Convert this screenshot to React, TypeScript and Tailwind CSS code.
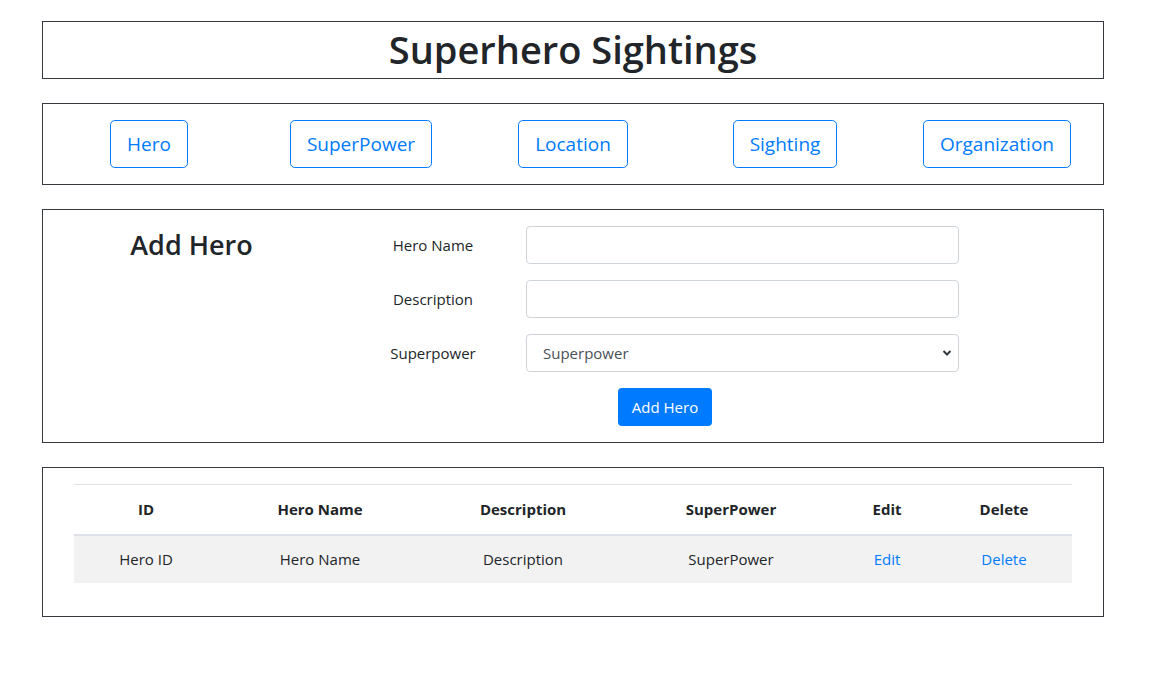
import React from "react";

const font = { fontFamily: '"Open Sans", "Noto Sans", "Liberation Sans", sans-serif' };

export default function App() {
  const navs = ["Hero", "SuperPower", "Location", "Sighting", "Organization"];
  return (
    <div className="min-h-[685px] bg-white text-[#212529]" style={font}>
      <div className="pt-[21px] pl-[42px] w-[1104px] flex flex-col gap-[24px]">
        {/* Title */}
        <div className="h-[58px] border border-[#343a40] flex items-center justify-center">
          <h1 className="text-[38px] leading-[1.2] font-semibold tracking-[0px]">Superhero Sightings</h1>
        </div>

        {/* Nav */}
        <div className="border border-[#343a40] py-[16px] grid grid-cols-5 justify-items-center">
          {navs.map((n) => (
            <button
              key={n}
              className="h-[48px] px-[16px] border border-[#007bff] rounded-[4.8px] text-[#007bff] text-[19px] leading-[1.5] bg-white"
            >
              {n}
            </button>
          ))}
        </div>

        {/* Add Hero form */}
        <div className="border border-[#343a40] py-[16px] flex">
          <div className="w-[297px] flex justify-center">
            <h2 className="text-[27px] leading-[38px] font-semibold tracking-[0px]">Add Hero</h2>
          </div>
          <div className="flex flex-col gap-[16px]">
            {["Hero Name", "Description"].map((l) => (
              <div key={l} className="flex items-center">
                <label className="w-[186px] text-center text-[15px]">{l}</label>
                <input className="w-[433px] h-[38px] border border-[#ced4da] rounded-[4px] px-3 text-[15px] outline-none" />
              </div>
            ))}
            <div className="flex items-center">
              <label className="w-[186px] text-center text-[15px]">Superpower</label>
              <div className="relative w-[433px] h-[38px] border border-[#ced4da] rounded-[4px] flex items-center pl-[16px] text-[15px] text-[#495057]">
                <span>Superpower</span>
                <svg className="absolute right-[6px] top-[14px]" width="10" height="8" viewBox="0 0 10 8">
                  <path d="M1.5 2 L5 5.5 L8.5 2" fill="none" stroke="#343a40" strokeWidth="2" />
                </svg>
              </div>
            </div>
            <div className="pl-[278px]">
              <button className="w-[94px] h-[38px] bg-[#007bff] text-white rounded-[4px] text-[15px]">Add Hero</button>
            </div>
          </div>
        </div>

        {/* Table */}
        <div className="border border-[#343a40] pt-[16px] pb-[33px] px-[31px]">
          <table className="w-[998px] table-fixed border-collapse text-center text-[15px]">
            <colgroup>
              <col className="w-[144px]" />
              <col className="w-[204px]" />
              <col className="w-[202px]" />
              <col className="w-[214px]" />
              <col className="w-[98px]" />
              <col className="w-[136px]" />
            </colgroup>
            <thead>
              <tr className="border-t border-[#dee2e6] border-b-2">
                {["ID", "Hero Name", "Description", "SuperPower", "Edit", "Delete"].map((h) => (
                  <th key={h} className="h-[50px] font-bold">{h}</th>
                ))}
              </tr>
            </thead>
            <tbody>
              <tr className="bg-[#f2f2f2]">
                <td className="h-[48px] pt-[1px]">Hero ID</td>
                <td className="pt-[1px]">Hero Name</td>
                <td className="pt-[1px]">Description</td>
                <td className="pt-[1px]">SuperPower</td>
                <td className="pt-[1px] text-[#007bff]">Edit</td>
                <td className="pt-[1px] text-[#007bff]">Delete</td>
              </tr>
            </tbody>
          </table>
        </div>
      </div>
    </div>
  );
}
